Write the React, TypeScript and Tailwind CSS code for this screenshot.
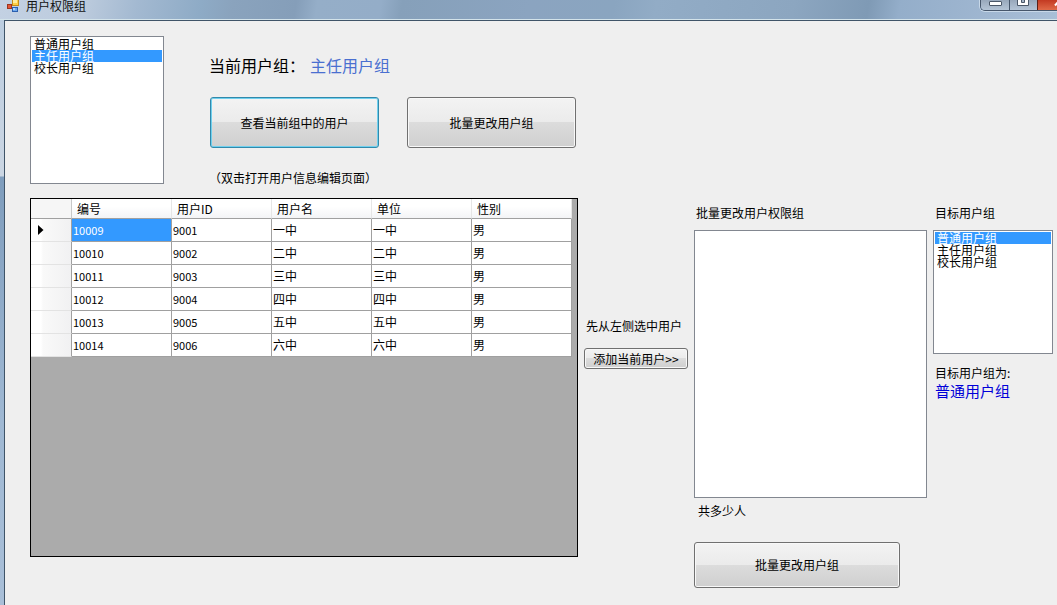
import { useState } from "react";
import clsx from "clsx";

const GROUPS = ["普通用户组", "主任用户组", "校长用户组"];

const COLUMNS = ["编号", "用户ID", "用户名", "单位", "性别"];

const USERS = [
  { no: "10009", id: "9001", name: "一中", unit: "一中", sex: "男" },
  { no: "10010", id: "9002", name: "二中", unit: "二中", sex: "男" },
  { no: "10011", id: "9003", name: "三中", unit: "三中", sex: "男" },
  { no: "10012", id: "9004", name: "四中", unit: "四中", sex: "男" },
  { no: "10013", id: "9005", name: "五中", unit: "五中", sex: "男" },
  { no: "10014", id: "9006", name: "六中", unit: "六中", sex: "男" },
];

type ListBoxProps = {
  id: string;
  label?: string;
  items: string[];
  value?: string;
  onChange?: (value: string) => void;
  className?: string;
};

function ListBox({ id, label, items, value, onChange, className }: ListBoxProps) {
  return (
    <select
      id={id}
      size={8}
      aria-label={label}
      value={value}
      onChange={(e) => onChange?.(e.target.value)}
      className={clsx(
        "block overflow-hidden rounded-none border border-[#828790] bg-white p-px text-xs text-black outline-none",
        className
      )}
    >
      {items.map((item) => (
        <option
          key={item}
          value={item}
          className={clsx(
            "flex h-3 min-h-0 items-center overflow-visible px-0.5 pt-0 pb-0.5 text-xs leading-3",
            item === value && "bg-[linear-gradient(#3399ff,#3399ff)] text-white checked:text-white"
          )}
        >
          {item}
        </option>
      ))}
    </select>
  );
}

type WinButtonProps = {
  children: React.ReactNode;
  focused?: boolean;
  className?: string;
};

function WinButton({ children, focused, className }: WinButtonProps) {
  return (
    <button
      type="button"
      className={clsx(
        "rounded-[3px] border bg-[linear-gradient(#f3f3f3,#ebebeb_49%,#dcdcdc_50%,#cfcfcf)] text-xs whitespace-nowrap text-black",
        focused
          ? "border-[#3289ab] shadow-[inset_0_0_0_1px_#6fd0ee]"
          : "border-[#707070] shadow-[inset_0_0_0_1px_#f8f8f8]",
        className
      )}
    >
      {children}
    </button>
  );
}

function TitleBar() {
  return (
    <header className="flex h-5 items-start justify-between border-b border-[#d3e3ea] bg-[linear-gradient(100deg,#c3d1e3_0%,#bccbdd_8%,#a3b9d1_13%,#8eabc6_19%,#8aa3bd_22%,#859eb9_28%,#95aec8_30%,#94adc8_36%,#86a0ba_38%,#8ba4c0_50%,#8aa5c0_58%,#92acc6_62%,#8ca6c0_75%,#7f9ab5_82%,#94aeca_85%,#a0b7d1_94%,#a9bfd7_100%)]">
      <div className="flex items-start gap-[7px] pl-1.5">
        <svg width="13" height="12" viewBox="0 0 13 12" aria-hidden="true">
          <rect x="6.5" y="-1.5" width="6" height="7" fill="#ffcf45" stroke="#c48a1a" />
          <rect x="7" y="0" width="4" height="3" fill="#ffeb9c" />
          <rect x="1.5" y="4.5" width="4" height="4" fill="#e4573a" stroke="#9c3620" />
          <rect x="6.5" y="7.5" width="5" height="4" fill="#6ea9ee" stroke="#2c5fae" />
          <rect x="7" y="8" width="2" height="2" fill="#b5d6fb" />
        </svg>
        <h1 className="text-xs leading-3 text-[#111]">用户权限组</h1>
      </div>
      <div className="flex h-[11px] overflow-hidden rounded-bl-[5px] border-b border-l border-[#46566b] shadow-[0_0_0_1px_#c8d8e8]">
        <button type="button" aria-label="最小化" className="w-7 bg-[linear-gradient(#98a8bb,#b4c4d6)]">
          <svg width="28" height="10" viewBox="0 0 28 10">
            <rect x="8.5" y="1.5" width="12" height="4" rx="0.5" fill="#fff" stroke="#4b5869" />
          </svg>
        </button>
        <button
          type="button"
          aria-label="最大化"
          className="w-7 border-l border-[#46566b] bg-[linear-gradient(#98a8bb,#b4c4d6)]"
        >
          <svg width="27" height="10" viewBox="0 0 27 10">
            <path d="M7.5 -1V5.5H18.5V-1" fill="#fff" stroke="#4b5869" />
            <path d="M11.5 -1V2.5H14.5V-1" fill="#a3b3c6" stroke="#4b5869" />
          </svg>
        </button>
        <button
          type="button"
          aria-label="关闭"
          className="w-5 border-l border-[#5a2018] bg-[linear-gradient(#c33a22,#e06a48)]"
        >
          <svg width="19" height="10" viewBox="0 0 19 10">
            <path d="M17 5.5L20 2" stroke="#fff" strokeWidth="2" />
          </svg>
        </button>
      </div>
    </header>
  );
}

function UserGrid() {
  return (
    <div className="flex-1 overflow-hidden border border-black bg-[#ababab]">
      <table className="table-fixed border-separate border-spacing-0 bg-white text-left text-xs">
        <colgroup>
          <col className="w-[41px]" />
          {COLUMNS.map((c) => (
            <col key={c} className="w-[100px]" />
          ))}
        </colgroup>
        <thead>
          <tr className="h-5">
            <th className="border-r border-b border-r-[#c8c8c8] border-b-[#a0a0a0] bg-[#f6f6f6] p-0" />
            {COLUMNS.map((c) => (
              <th
                key={c}
                scope="col"
                className="border-r border-b border-r-[#e6e6e6] border-b-[#a0a0a0] bg-[linear-gradient(#fff_40%,#f3f4f6)] py-0 pr-0 pl-[5px] leading-4 font-normal"
              >
                {c}
              </th>
            ))}
          </tr>
        </thead>
        <tbody>
          {USERS.map((u, i) => (
            <tr key={u.no} className="h-[23px]">
              <th className="border-r border-b border-r-[#a0a0a0] border-b-[#e3e3e3] bg-[linear-gradient(90deg,#fff_25%,#f9f9f9_30%,#f1f1f2)] p-0">
                {i === 0 && (
                  <svg width="6" height="10" viewBox="0 0 6 10" className="ml-[7px]" aria-hidden="true">
                    <path d="M0 0L5.5 5L0 10Z" fill="#000" />
                  </svg>
                )}
              </th>
              {[u.no, u.id, u.name, u.unit, u.sex].map((cell, j) => (
                <td
                  key={j}
                  className={clsx(
                    "border-r border-b border-[#a0a0a0] py-0 pr-0 pl-px leading-4",
                    j < 2 && "text-[11px]",
                    i === 0 && j === 0 && "bg-[#3399ff] text-white"
                  )}
                >
                  {cell}
                </td>
              ))}
            </tr>
          ))}
        </tbody>
      </table>
    </div>
  );
}

export default function App() {
  const [current, setCurrent] = useState("主任用户组");
  const [target, setTarget]   = useState("普通用户组");

  return (
    <div className="flex min-h-screen flex-col bg-[#efefef] font-['Noto_Sans_CJK_SC','Liberation_Sans',sans-serif] text-xs text-black">
      <TitleBar />
      <div className="flex flex-1">
        {/* Window frame */}
        <div className="w-1 bg-[linear-gradient(#bccde0,#cbd6e3_156px,#7f9dbd_157px,#9fb8d3_400px,#a9bfd8)]" />

        <main className="flex flex-1 gap-1.5 border-t border-l border-[#3f5468] pr-1 pl-[25px]">
          {/* Current group + users */}
          <section className="flex min-w-[548px] flex-1 flex-col pt-[15px] pb-12">
            <div className="mb-3 flex items-start">
              <ListBox
                id="current-group"
                label="当前用户组"
                items={GROUPS}
                value={current}
                onChange={setCurrent}
                className="h-[148px] w-[134px]"
              />
              <div className="ml-[45px] pt-[17px]">
                <p className="text-base leading-6">
                  当前用户组：
                  <span className="ml-[5px] text-[#4a6fd0]">{current}</span>
                </p>
                <div className="mt-5 flex gap-7 pl-px">
                  <WinButton focused className="h-[51px] w-[169px]">查看当前组中的用户</WinButton>
                  <WinButton className="h-[51px] w-[169px]">批量更改用户组</WinButton>
                </div>
                <p className="mt-[22px] leading-4">（双击打开用户信息编辑页面）</p>
              </div>
            </div>
            <UserGrid />
          </section>

          <section className="w-[104px] pt-[297px]">
            <p className="pl-0.5 leading-4 whitespace-nowrap">先从左侧选中用户</p>
            <WinButton className="mt-3.5 h-[21px] w-full">添加当前用户&gt;&gt;</WinButton>
          </section>

          {/* Batch change */}
          <section className="w-[233px] pt-46">
            <label htmlFor="batch-users" className="block pl-0.5 leading-4">批量更改用户权限组</label>
            <ListBox id="batch-users" items={[]} className="mt-[9px] h-[268px] w-full" />
            <p className="mt-[5px] pl-1 leading-4">共多少人</p>
            <WinButton className="mt-[23px] h-[46px] w-[206px]">批量更改用户组</WinButton>
          </section>

          <section className="w-[120px] pt-46">
            <label htmlFor="target-group" className="block pl-0.5 leading-4">目标用户组</label>
            <ListBox
              id="target-group"
              items={GROUPS}
              value={target}
              onChange={setTarget}
              className="mt-[9px] h-[124px] w-full"
            />
            <p className="mt-[11px] pl-0.5 leading-4">目标用户组为:</p>
            <p className="pl-0.5 text-[15px] leading-5 text-[#0000d8]">{target}</p>
          </section>
        </main>
      </div>
    </div>
  );
}
